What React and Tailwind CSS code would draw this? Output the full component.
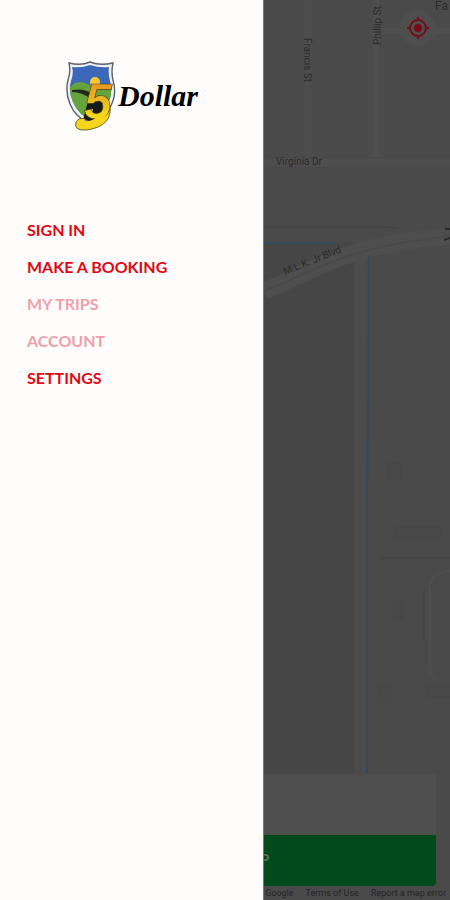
const MENU = [
  { label: "SIGN IN", enabled: true },
  { label: "MAKE A BOOKING", enabled: true },
  { label: "MY TRIPS", enabled: false },
  { label: "ACCOUNT", enabled: false },
  { label: "SETTINGS", enabled: true },
];

function ShieldLogo() {
  return (
    <svg viewBox="0 0 52 74" className="h-[74px] w-[52px] shrink-0" aria-hidden="true">
      <defs>
        <clipPath id="shield">
          <path d="M6 8 Q16 9 24 6 Q33 9 43 8 Q42 15 44 22 Q48 37 39 49 Q34 57 25 62 Q12 55 7 43 Q2 32 5 22 Q8 14 6 8Z" />
        </clipPath>
        <linearGradient id="gold" x1="0" y1="0" x2="0" y2="1">
          <stop offset="0.2" stopColor="#e59a22" />
          <stop offset="0.8" stopColor="#f6dc18" />
        </linearGradient>
      </defs>
      <path d="M3 4 Q15 7 24 3 Q34 7 47 4 Q45 13 47 21 Q52 38 42 51 Q36 60 25 66 Q9 58 4 45 Q-1 33 2 21 Q5 13 3 4Z" fill="#eef0f3" stroke="#5c6268" strokeWidth="1.4" />
      <g clipPath="url(#shield)">
        <rect width="52" height="74" fill="#3b68b8" />
        <circle cx="29" cy="23" r="5" fill="#f3ca35" />
        <path d="M0 34 Q8 20 19 24 Q25 27 30 28 Q40 25 52 31 V74 H0Z" fill="#65a43a" />
        <path d="M6 31 Q18 29 25 34 L25 40 Q16 33 6 33Z" fill="#202820" />
      </g>
      <path d="M22 42 H36 L38 56 L30 63 L17 61Z" fill="#171b17" />
      <path d="M26 50 L25 53 M30 55 L29 59" stroke="#eeeeee" strokeWidth="2" />
      <path d="M44 46 Q47 67 21 71 Q7 72 10 63 Q13 58 19 60 Q19 64 25 62 Q35 59 38 50Z" fill="#f5d61c" stroke="#514815" strokeWidth="0.8" />
      <text x="18" y="60" fontFamily="Liberation Sans, sans-serif" fontSize="50" fontWeight="700" fontStyle="italic" fill="url(#gold)" stroke="#4a3d14" strokeWidth="0.6">5</text>
      <path d="M42 52 Q37 66 21 69 Q11 70 11 64 Q14 60 18 60 Q19 64 26 61 Q34 58 37 53Z" fill="#f5d61c" />
    </svg>
  );
}

function StreetMap() {
  return (
    <svg viewBox="0 0 450 900" preserveAspectRatio="xMinYMin slice" className="col-start-1 row-start-1 h-full w-full" aria-label="Map">
      <rect width="450" height="900" fill="#4a4a4a" />
      <path d="M264 242 H354 V775 H264Z" fill="#464646" />
      <g fill="none" stroke="#4e4e4e">
        <path d="M308 0 V160 M376 0 V160" strokeWidth="7" />
        <path d="M264 162 H450" strokeWidth="9" />
        <path d="M380 31 H450" strokeWidth="6" />
        <path d="M264 291 C314 271 342 245 450 236" strokeWidth="17" />
        <path d="M360 252 V775" stroke="#4c4c4c" strokeWidth="10" />
        <path d="M450 571 Q428 573 430 589 V655 Q429 676 436 680" strokeWidth="3" />
      </g>
      <g fill="none" strokeWidth="1">
        <path d="M264 158 H450 M264 168 H450" stroke="#464646" />
        <path d="M264 227 H390 L398 229" stroke="#3d4441" />
        <path d="M264 291 C320 269 342 248 450 236" stroke="#494949" strokeWidth="2" />
        <path d="M380 558 H450 M424 588 V640" stroke="#464646" strokeWidth="2" />
        <path d="M264 243 H336" stroke="#344a5a" strokeWidth="2" />
        <path d="M369 256 L367 520 V773" stroke="#35495a" strokeWidth="2" />
      </g>
      <g fill="#484848">
        <rect x="386" y="462" width="17" height="18" />
        <rect x="393" y="526" width="50" height="13" />
        <rect x="392" y="600" width="12" height="20" />
        <rect x="377" y="685" width="15" height="18" />
        <rect x="425" y="685" width="25" height="13" />
      </g>
      <g fontFamily="Roboto, sans-serif" fontSize="10" fill="#2b2b2b">
        <text transform="translate(304 38) rotate(90)">Francis St</text>
        <text transform="translate(381 45) rotate(-90)">Phillip St</text>
        <text x="276" y="165">Virginia Dr</text>
        <text transform="translate(285 275) rotate(-22)">M.L.K. Jr Blvd</text>
        <text x="435" y="10" fontSize="12">Fa</text>
      </g>
      <path d="M445 229 H450 M444 240 L450 238" stroke="#2b2b2b" strokeWidth="2" />
    </svg>
  );
}

function LocateButton() {
  return (
    <button type="button" aria-label="Find my location" className="flex size-9 items-center justify-center rounded-full bg-[#4e4e4e]">
      <svg viewBox="0 0 24 24" className="size-6" fill="none" stroke="#760c19" strokeWidth="2">
        <circle cx="12" cy="12" r="8" />
        <circle cx="12" cy="12" r="4" fill="#760c19" stroke="none" />
        <path d="M12 1 V5 M12 19 V23 M1 12 H5 M19 12 H23" />
      </svg>
    </button>
  );
}

export default function App() {
  return (
    <div className="grid min-h-screen grid-cols-1 overflow-hidden bg-[#4a4a4a] font-['Lato',sans-serif]">
      <div className="relative col-start-1 row-start-1 grid">
        <div className="absolute inset-0 grid">
          <StreetMap />
        </div>
        <div className="relative flex flex-col justify-between">
          <div className="flex justify-end px-3.5 pt-2.5">
            <LocateButton />
          </div>
          <div>
            <section className="mx-3.5 overflow-hidden rounded-b-sm bg-[#4e4e4e]">
              <div className="h-[61px]" />
              <button type="button" className="h-[51px] w-full bg-[#004a1c] pb-1 text-base font-bold text-[#4c7656]">
                SET PICKUP
              </button>
            </section>
            <footer className="flex h-3.5 items-center justify-end gap-3 pr-1 font-['Roboto',sans-serif] text-[9px] leading-3 text-[#262626]">
              <span>Google</span>
              <a href="#terms">Terms of Use</a>
              <a href="#report">Report a map error</a>
            </footer>
          </div>
        </div>
      </div>

      <aside className="z-10 col-start-1 row-start-1 w-[264px] border-r border-[#777777] bg-[#fefdfc]">
        <header className="flex items-center pt-[59px] pl-[66px]">
          <ShieldLogo />
          <h1 className="font-['Liberation_Serif',serif] text-[30px] leading-9 font-bold text-black italic">Dollar</h1>
        </header>
        <nav className="flex flex-col items-start gap-[13px] pt-[85px] pl-[27px]">
          {MENU.map(({ label, enabled }) => (
            <button
              key={label}
              type="button"
              disabled={!enabled}
              className="text-base leading-6 font-bold text-[#e30613] disabled:text-[#f0a0aa]"
            >
              {label}
            </button>
          ))}
        </nav>
      </aside>
    </div>
  );
}
